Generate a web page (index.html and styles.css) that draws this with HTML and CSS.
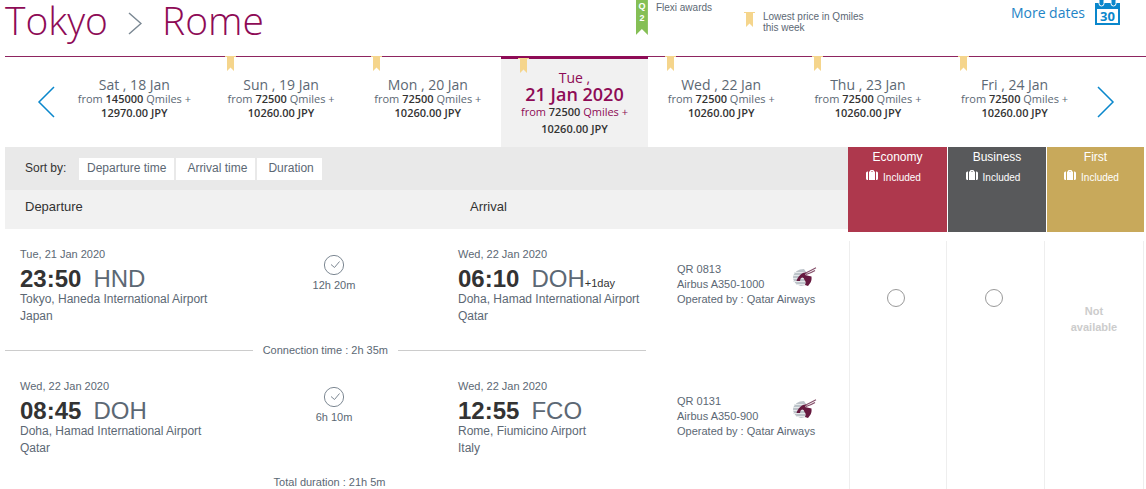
FILE: index.html
```html
<!DOCTYPE html>
<html lang="en">
<head>
<meta charset="utf-8">
<meta name="viewport" content="width=device-width, initial-scale=1">
<title>Tokyo to Rome</title>
<link rel="stylesheet" href="styles.css">
</head>
<body>
<svg class="defs" aria-hidden="true">
  <symbol id="ribbon" viewBox="0 0 11 15"><path fill="#f5d58c" d="M0 0H11V1H9V15L5.500 11.500L2 15V1H0Z"/></symbol>
  <symbol id="clock" viewBox="0 0 22 22"><circle cx="11" cy="11" r="9.600" fill="none" stroke="#7d8893"/><path d="M8 10.500L11.500 13.500L16.500 7.500" fill="none" stroke="#7d8893"/></symbol>
  <symbol id="bag" viewBox="0 0 12 11"><path fill="#fff" d="M2 1.500V10H1.500Q0 10 0 8.500V3Q0 1.500 1.500 1.500ZM10 1.500V10h.5Q12 10 12 8.500V3Q12 1.500 10.500 1.500ZM3 1.500H4V1Q4 0 5 0H7Q8 0 8 1V1.500H9V10H3ZM5 1V1.500H7V1Z"/></symbol>
  <symbol id="oryx" viewBox="0 0 24 20">
    <path fill="#bcc3c9" d="M11 2Q2 2 0 10Q0 17 8 19L13 18L12 12L13 5Z"/>
    <path d="M1 5.500H12M0 8.500H12M0 11.500H12M0 14.500H12M3 17.500H12" stroke="#e6e9eb" fill="none"/>
    <path fill="#66193f" d="M3.500 14Q5 9 9 6.500Q11 5 14 5.500L12 8L18.500 9.500Q19 14 16.500 17L15 19L12 18Q13.500 15 11.500 13Q11 10 9 10.500Q7 11 7 14Z"/>
    <path d="M12 6.500Q16 4.500 23 .8M13 7.500Q18 6 22 3.500" stroke="#85506b" stroke-width="1.200" fill="none"/>
  </symbol>
</svg>

<header class="top">
  <h1 class="route">Tokyo
    <svg class="route-arrow" viewBox="0 0 14 24" aria-hidden="true"><path d="M1 2L13 12.500L1 23" fill="none" stroke="#7b8893" stroke-width="1.500"/></svg>
    Rome</h1>
  <div class="legend flexi">
    <span class="flexi-flag"><span>Q</span><span>2</span></span>
    <span>Flexi awards</span>
  </div>
  <div class="legend lowest">
    <svg class="ribbon" aria-hidden="true"><use href="#ribbon"/></svg>
    <span>Lowest price in Qmiles<br>this week</span>
  </div>
  <a class="more" href="#dates">More dates
    <svg class="calendar" viewBox="0 0 25 25" aria-hidden="true">
      <path fill="#0a87cc" d="M0 3H25V25H0Z"/><path fill="#fff" d="M2 9H23V23H2Z"/>
      <g fill="#0a87cc" stroke="#fff"><rect x="4" y="-2" width="5" height="8" rx="2.500"/><rect x="16" y="-2" width="5" height="8" rx="2.500"/></g>
      <text x="12.500" y="20.500" text-anchor="middle" class="calendar-day">30</text>
    </svg></a>
</header>

<nav class="dates" id="dates" aria-label="Departure date">
  <button class="step" aria-label="Earlier dates"><svg viewBox="0 0 18 32"><path d="M17 1L2 16L17 31" fill="none" stroke="#0a87cc" stroke-width="1.500"/></svg></button>
  <div class="days">
    <button class="day"><span class="name">Sat , 18 Jan</span><span>from <b>145000</b> Qmiles +</span><b>12970.00 JPY</b></button>
    <button class="day"><svg class="ribbon"><use href="#ribbon"/></svg><span class="name">Sun , 19 Jan</span><span>from <b>72500</b> Qmiles +</span><b>10260.00 JPY</b></button>
    <button class="day"><svg class="ribbon"><use href="#ribbon"/></svg><span class="name">Mon , 20 Jan</span><span>from <b>72500</b> Qmiles +</span><b>10260.00 JPY</b></button>
    <button class="day active" aria-current="date"><svg class="ribbon"><use href="#ribbon"/></svg><span class="name">Tue ,</span><span class="full">21 Jan 2020</span><span>from <b>72500</b> Qmiles +</span><b class="cash">10260.00 JPY</b></button>
    <button class="day"><svg class="ribbon"><use href="#ribbon"/></svg><span class="name">Wed , 22 Jan</span><span>from <b>72500</b> Qmiles +</span><b>10260.00 JPY</b></button>
    <button class="day"><svg class="ribbon"><use href="#ribbon"/></svg><span class="name">Thu , 23 Jan</span><span>from <b>72500</b> Qmiles +</span><b>10260.00 JPY</b></button>
    <button class="day"><svg class="ribbon"><use href="#ribbon"/></svg><span class="name">Fri , 24 Jan</span><span>from <b>72500</b> Qmiles +</span><b>10260.00 JPY</b></button>
  </div>
  <button class="step" aria-label="Later dates"><svg viewBox="0 0 18 32"><path d="M1 1L16 16L1 31" fill="none" stroke="#0a87cc" stroke-width="1.500"/></svg></button>
</nav>

<main class="results">
  <section class="flights">
    <div class="sort"><span class="sort-label">Sort by:</span><button>Departure time</button><button>Arrival time</button><button>Duration</button></div>
    <div class="heads"><span>Departure</span><span>Arrival</span></div>

    <article class="leg">
      <div class="stop"><div class="when">Tue, 21 Jan 2020</div><div class="time"><b>23:50</b>HND</div><div class="place">Tokyo, Haneda International Airport<br>Japan</div></div>
      <div class="length"><svg class="clock" aria-hidden="true"><use href="#clock"/></svg>12h 20m</div>
      <div class="stop arrive"><div class="when">Wed, 22 Jan 2020</div><div class="time"><b>06:10</b>DOH<small>+1day</small></div><div class="place">Doha, Hamad International Airport<br>Qatar</div></div>
      <div class="plane"><div class="plane-top"><span>QR 0813<br>Airbus A350-1000</span><svg class="oryx" aria-hidden="true"><use href="#oryx"/></svg></div>Operated by : Qatar Airways</div>
    </article>
    <div class="connection">Connection time : 2h 35m</div>
    <article class="leg">
      <div class="stop"><div class="when">Wed, 22 Jan 2020</div><div class="time"><b>08:45</b>DOH</div><div class="place">Doha, Hamad International Airport<br>Qatar</div></div>
      <div class="length"><svg class="clock" aria-hidden="true"><use href="#clock"/></svg>6h 10m</div>
      <div class="stop arrive"><div class="when">Wed, 22 Jan 2020</div><div class="time"><b>12:55</b>FCO</div><div class="place">Rome, Fiumicino Airport<br>Italy</div></div>
      <div class="plane"><div class="plane-top"><span>QR 0131<br>Airbus A350-900</span><svg class="oryx" aria-hidden="true"><use href="#oryx"/></svg></div>Operated by : Qatar Airways</div>
    </article>
    <div class="total">Total duration : 21h 5m</div>
  </section>

  <section class="cabins">
    <div class="cabin-heads">
      <div class="cabin economy"><span>Economy</span><span class="included"><svg class="bag" aria-hidden="true"><use href="#bag"/></svg>Included</span></div>
      <div class="cabin business"><span>Business</span><span class="included"><svg class="bag" aria-hidden="true"><use href="#bag"/></svg>Included</span></div>
      <div class="cabin first"><span>First</span><span class="included"><svg class="bag" aria-hidden="true"><use href="#bag"/></svg>Included</span></div>
    </div>
    <div class="fares">
      <div class="fare"><input type="radio" name="fare" aria-label="Economy"></div>
      <div class="fare"><input type="radio" name="fare" aria-label="Business"></div>
      <div class="fare none">Not<br>available</div>
    </div>
  </section>
</main>
</body>
</html>
```
FILE: styles.css
```css
* { box-sizing: border-box; }

body {
  display: flex;
  flex-direction: column;
  min-height: 100vh;
  margin: 0;
  padding-left: 5px;
  background: #fff;
  color: #5c6874;
  font: 11px/15px "Liberation Sans", Arial, sans-serif;
}

button {
  border: 0;
  padding: 0;
  background: none;
  color: inherit;
  font: inherit;
  cursor: pointer;
}

svg { display: block; flex: none; }
.defs { position: absolute; width: 0; height: 0; }
.ribbon { width: 11px; height: 15px; }

/* Header */
.top {
  display: flex;
  align-items: flex-start;
  height: 56px;
  padding-right: 26px;
}

.route {
  display: flex;
  flex: 1;
  align-items: center;
  gap: 20px;
  margin: 0;
  color: #8e0b56;
  font: 300 39px/40px "Open Sans", sans-serif;
}

.route-arrow { width: 14px; height: 24px; margin-top: 6px; }

.legend {
  display: flex;
  gap: 8px;
  font-size: 10px;
  line-height: 11px;
}

.flexi { width: 108px; }
.flexi > span:last-child { padding-top: 2px; }
.lowest { width: 267px; padding-top: 11px; }
.lowest .ribbon { margin-top: 1px; }

.flexi-flag {
  display: flex;
  flex-direction: column;
  align-items: center;
  gap: 1px;
  width: 12px;
  height: 35px;
  padding-top: 1px;
  background: #85bf55;
  clip-path: polygon(0 0, 100% 0, 100% 100%, 50% 83%, 0 100%);
  color: #fff;
  font-size: 9px;
  font-weight: bold;
}

.more {
  display: flex;
  gap: 10px;
  color: #1e84c6;
  font: 14px/26px "Open Sans", sans-serif;
  text-decoration: none;
}

.calendar { width: 25px; height: 25px; }
.calendar-day { fill: #0a87cc; font: bold 13px "Open Sans", sans-serif; }

/* Date strip */
.dates {
  display: flex;
  height: 91px;
  border-top: 1px solid #8e2460;
}

.step {
  display: flex;
  align-items: center;
  width: 56px;
  padding-left: 32px;
}

.step:last-child { width: 58px; padding-left: 9px; }
.step svg { width: 18px; height: 32px; }

.days {
  display: grid;
  flex: 1;
  grid-template-columns: repeat(7, 1fr);
}

.day {
  position: relative;
  display: flex;
  flex-direction: column;
  align-items: center;
  padding-top: 20px;
  font: 11px/14px "Open Sans", sans-serif;
}

.day b { color: #333; font-weight: 600; }
.day .name { font-size: 14px; line-height: 15px; }
.day .ribbon { position: absolute; top: -1px; left: 17px; }

.day.active {
  margin-top: -1px;
  padding-top: 11px;
  border-top: 3px solid #8e0b56;
  background: #f1f1f1;
  color: #8e0b56;
}

.day .full { margin-bottom: 2px; font-size: 18px; font-weight: 600; line-height: 18px; }
.day .cash { margin-top: 3px; }

/* Results */
.results {
  display: grid;
  flex: 1;
  grid-template-columns: 1fr 296px;
  padding-right: 2px;
}

.sort {
  display: flex;
  align-items: center;
  gap: 2px;
  height: 43px;
  padding-left: 20px;
  background: #e9e9e9;
  font-size: 12px;
}

.sort-label { width: 52px; color: #333; }
.sort button { height: 22px; padding: 0 8px; background: #fff; }
.sort button + button { padding-left: 11px; }

.heads {
  display: grid;
  grid-template-columns: 445fr 378fr;
  height: 39px;
  padding: 9px 0 0 20px;
  background: #f1f1f1;
  color: #333;
  font-size: 13px;
}

.leg {
  display: grid;
  grid-template-columns: 253fr 122fr 282fr 171fr;
  padding: 15px 0 0 15px;
}

.when { line-height: 20px; }
.time { padding-top: 2px; font-size: 24px; line-height: 25px; }
.time b { margin-right: 12px; color: #333; }
.time small { color: #333; font-size: 11px; line-height: 11px; }
.place { font-size: 12px; line-height: 17px; }
.arrive { padding-left: 63px; }

.length {
  display: flex;
  flex-direction: column;
  align-items: center;
  gap: 2px;
  padding-top: 10px;
}

.clock { width: 22px; height: 22px; }
.plane { padding-top: 18px; }
.plane-top { display: flex; justify-content: space-between; padding-right: 31px; }
.oryx { width: 24px; height: 20px; margin-top: 5px; }

.connection {
  display: flex;
  align-items: center;
  gap: 10px;
  width: 76%;
  margin: 18px 0 3px;
}

.connection::before,
.connection::after {
  content: "";
  flex: 1;
  border-top: 1px solid #ccc;
}

.total { width: 77%; margin-top: 18px; line-height: 14px; text-align: center; }

/* Cabins */
.cabins { display: flex; flex-direction: column; }

.cabin-heads,
.fares {
  display: grid;
}

.cabin-heads { grid-template-columns: 99fr 98fr 97fr; gap: 1px; }

.cabin {
  display: flex;
  flex-direction: column;
  align-items: center;
  gap: 4px;
  height: 85px;
  padding-top: 3px;
  color: #fff;
  font-size: 12px;
}

.economy { background: #ae384d; }
.business { background: #58595b; }
.first { background: #c8a95b; }
.included { display: flex; gap: 5px; padding-right: 8px; font-size: 10px; line-height: 17px; }
.bag { width: 12px; height: 11px; margin-top: 1px; }

.fares {
  flex: 1;
  grid-template-columns: 97fr 98fr 99fr;
  margin: 9px 0 0 1px;
  border-right: 1px solid #eee;
}

.fare {
  padding: 48px 4px 0 0;
  border-left: 1px solid #eee;
  text-align: center;
}

.fare input {
  appearance: none;
  width: 18px;
  height: 18px;
  margin: 0;
  border: 1px solid #999;
  border-radius: 50%;
}

.fare input:checked { box-shadow: inset 0 0 0 4px #fff; background: #8e0b56; }
.fare.none { padding: 62px 0 0; color: #ccc; font-weight: bold; line-height: 16px; }
```
